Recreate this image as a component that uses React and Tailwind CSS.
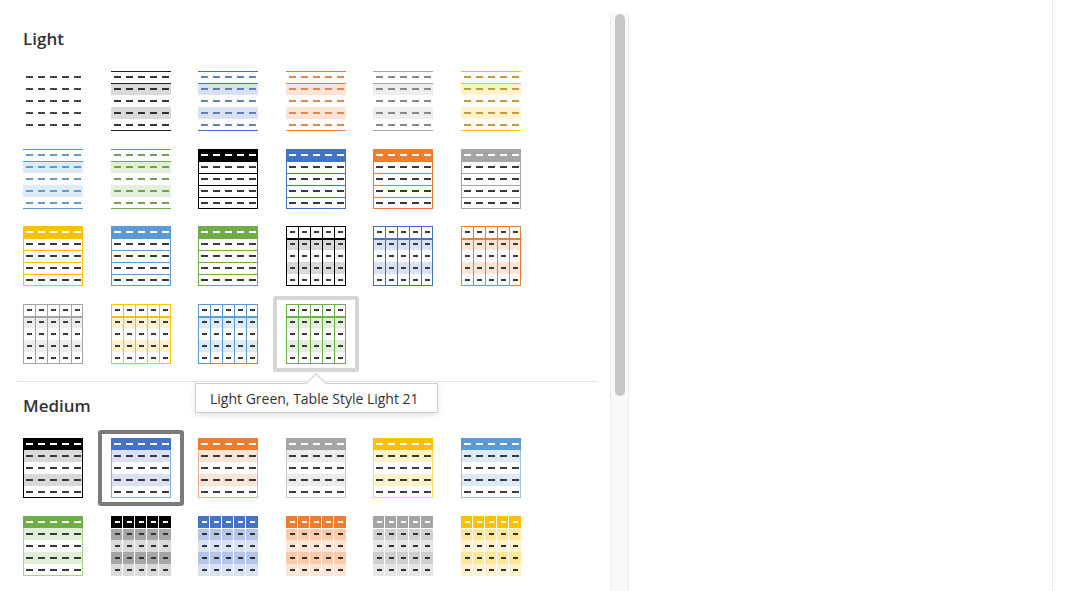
import React from "react";

const BODY = "#3a3a3a";

function Dashes({ colors, narrow }) {
  const out = [];
  for (let r = 0; r < 5; r++) {
    for (let c = 0; c < 5; c++) {
      out.push(
        <rect
          key={`${r}-${c}`}
          x={narrow ? 12 * c + 3.5 : 12 * c + 2.5}
          y={12 * r + 5}
          width={narrow ? 5 : 7}
          height={2}
          fill={colors[r]}
        />
      );
    }
  }
  return <>{out}</>;
}

function Thumb({ t }) {
  let body = null;
  if (t.kind === "plain") {
    body = <Dashes colors={Array(5).fill("#444")} />;
  } else if (t.kind === "band") {
    body = (
      <>
        <rect x="0" y="12" width="60" height="12" fill={t.band} />
        <rect x="0" y="36" width="60" height="12" fill={t.band} />
        <rect x="0" y="0" width="60" height="1" fill={t.line} />
        <rect x="0" y="12" width="60" height="1" fill={t.line} />
        <rect x="0" y="59" width="60" height="1" fill={t.line} />
        <Dashes colors={Array(5).fill(t.dash)} />
      </>
    );
  } else if (t.kind === "header") {
    body = (
      <>
        <rect x="0" y="0" width="60" height="12" fill={t.color} />
        {[12, 24, 36, 48].map((y) => (
          <rect key={y} x="0" y={y} width="60" height="1" fill={t.color} />
        ))}
        <rect x="0.5" y="0.5" width="59" height="59" fill="none" stroke={t.color} />
        <Dashes colors={["#fff", BODY, BODY, BODY, BODY]} />
      </>
    );
  } else if (t.kind === "grid") {
    body = (
      <>
        <rect x="0" y="12" width="60" height="12" fill={t.band} />
        <rect x="0" y="36" width="60" height="12" fill={t.band} />
        {[12, 24, 36, 48].map((x) => (
          <rect key={x} x={x} y="0" width="1" height="60" fill={t.color} />
        ))}
        <rect x="0" y="11.5" width="60" height="2" fill={t.color} />
        <rect x="0.5" y="0.5" width="59" height="59" fill="none" stroke={t.color} />
        <Dashes colors={Array(5).fill(BODY)} narrow />
      </>
    );
  } else if (t.kind === "medium") {
    body = (
      <>
        <rect x="0" y="12" width="60" height="12" fill={t.band} />
        <rect x="0" y="36" width="60" height="12" fill={t.band} />
        <rect x="0.5" y="0.5" width="59" height="59" fill="none" stroke={t.border} />
        <rect x="0" y="0" width="60" height="12" fill={t.color} />
        <Dashes colors={["#fff", BODY, BODY, BODY, BODY]} />
      </>
    );
  } else if (t.kind === "column") {
    body = (
      <>
        <rect x="0" y="0" width="60" height="12" fill={t.color} />
        <rect x="0" y="12" width="60" height="12" fill={t.b1} />
        <rect x="0" y="24" width="60" height="12" fill={t.b2} />
        <rect x="0" y="36" width="60" height="12" fill={t.b1} />
        <rect x="0" y="48" width="60" height="12" fill={t.b2} />
        {[12, 24, 36, 48].map((x) => (
          <rect key={x} x={x - 1} y="0" width="1" height="60" fill="#fff" />
        ))}
        <rect x="0" y="12" width="60" height="1" fill="#fff" />
        <Dashes colors={["#fff", "#333", "#333", "#333", "#333"]} narrow />
      </>
    );
  }
  return (
    <svg width="60" height="60" viewBox="0 0 60 60" shapeRendering="crispEdges">
      {body}
    </svg>
  );
}

const light = [
  { kind: "plain" },
  { kind: "band", line: "#1f1f1f", band: "#d9d9d9", dash: "#333" },
  { kind: "band", line: "#4472c4", band: "#d9e1f2", dash: "#5f7fbd" },
  { kind: "band", line: "#ed7d31", band: "#fce4d6", dash: "#dc8a58" },
  { kind: "band", line: "#a5a5a5", band: "#ededed", dash: "#888" },
  { kind: "band", line: "#ffc000", band: "#fff2cc", dash: "#bf9d40" },
  { kind: "band", line: "#5b9bd5", band: "#ddebf7", dash: "#6598cb" },
  { kind: "band", line: "#70ad47", band: "#e2efda", dash: "#729f55" },
  { kind: "header", color: "#000000" },
  { kind: "header", color: "#4472c4" },
  { kind: "header", color: "#ed7d31" },
  { kind: "header", color: "#a5a5a5" },
  { kind: "header", color: "#ffc000" },
  { kind: "header", color: "#5b9bd5" },
  { kind: "header", color: "#70ad47" },
  { kind: "grid", color: "#000000", band: "#d9d9d9" },
  { kind: "grid", color: "#4472c4", band: "#d9e1f2" },
  { kind: "grid", color: "#ed7d31", band: "#fce4d6" },
  { kind: "grid", color: "#a5a5a5", band: "#ededed" },
  { kind: "grid", color: "#ffc000", band: "#fff2cc" },
  { kind: "grid", color: "#5b9bd5", band: "#ddebf7" },
  { kind: "grid", color: "#70ad47", band: "#e2efda", sel: "light" },
];

const medium = [
  { kind: "medium", color: "#000000", border: "#000000", band: "#d9d9d9" },
  { kind: "medium", color: "#4472c4", border: "#8ea9db", band: "#d9e1f2", sel: "dark" },
  { kind: "medium", color: "#ed7d31", border: "#f4b084", band: "#fce4d6" },
  { kind: "medium", color: "#a5a5a5", border: "#c9c9c9", band: "#ededed" },
  { kind: "medium", color: "#ffc000", border: "#ffd966", band: "#fff2cc" },
  { kind: "medium", color: "#5b9bd5", border: "#9bc2e6", band: "#ddebf7" },
  { kind: "medium", color: "#70ad47", border: "#a9d08e", band: "#e2efda" },
  { kind: "column", color: "#000000", b1: "#a6a6a6", b2: "#d9d9d9" },
  { kind: "column", color: "#4472c4", b1: "#b4c6e7", b2: "#d9e1f2" },
  { kind: "column", color: "#ed7d31", b1: "#f8cbad", b2: "#fce4d6" },
  { kind: "column", color: "#a5a5a5", b1: "#d0d0d0", b2: "#e6e6e6" },
  { kind: "column", color: "#ffc000", b1: "#ffe699", b2: "#fff2cc" },
];

function Cell({ t }) {
  const frame =
    t.sel === "light"
      ? "border-4 border-[#d6d6d6] rounded-[3px]"
      : t.sel === "dark"
      ? "border-4 border-[#7b7b7b] rounded-[3px]"
      : "border-4 border-transparent";
  return (
    <div className={`w-[86px] h-[76px] flex items-center justify-center ${frame}`}>
      <Thumb t={t} />
    </div>
  );
}

function Gallery({ items }) {
  return (
    <div className="grid grid-cols-[repeat(6,86px)] gap-x-[1.6px] gap-y-[1.67px] ml-[10px]">
      {items.map((t, i) => (
        <Cell key={i} t={t} />
      ))}
    </div>
  );
}

export default function App() {
  return (
    <div
      className="w-[1075px] h-[591px] bg-white flex overflow-hidden"
      style={{ fontFamily: '"Open Sans", "Noto Sans", sans-serif' }}
    >
      <div className="w-[610px] h-full relative overflow-hidden">
        <div className="pt-[27px] pl-[23px] h-[50px] text-[17px] leading-[24px] font-semibold text-[#333]">
          Light
        </div>
        <div className="mt-[13px]">
          <Gallery items={light} />
        </div>
        <div className="mt-[9px] ml-[17px] w-[581px] h-px bg-[#e3e3e3]" />
        <div className="mt-[12px] pl-[23px] h-[24px] text-[17px] leading-[24px] font-semibold text-[#333]">
          Medium
        </div>
        <div className="mt-[12px]">
          <Gallery items={medium} />
        </div>

        <div className="absolute left-[195px] top-[383px] w-[243px] h-[30px] bg-white border border-[#cfcfcf] shadow-[0_2px_6px_rgba(0,0,0,0.12)] flex items-center pl-[14px] text-[14px] text-[#333] whitespace-nowrap">
          <div className="absolute left-[113px] top-[-8px] w-[14px] h-[14px] bg-white border-l border-t border-[#cfcfcf] rotate-45" />
          <span className="relative">Light Green, Table Style Light 21</span>
        </div>
      </div>

      <div className="w-[19px] mt-[13px] h-[578px] bg-[#f8f8f8] border-x border-[#ececec] flex justify-center">
        <div className="w-[10px] h-[382px] mt-[1px] rounded-full bg-[#c6c6c6]" />
      </div>

      <div className="w-[424px] h-full border-r border-[#ececec]" />
    </div>
  );
}
